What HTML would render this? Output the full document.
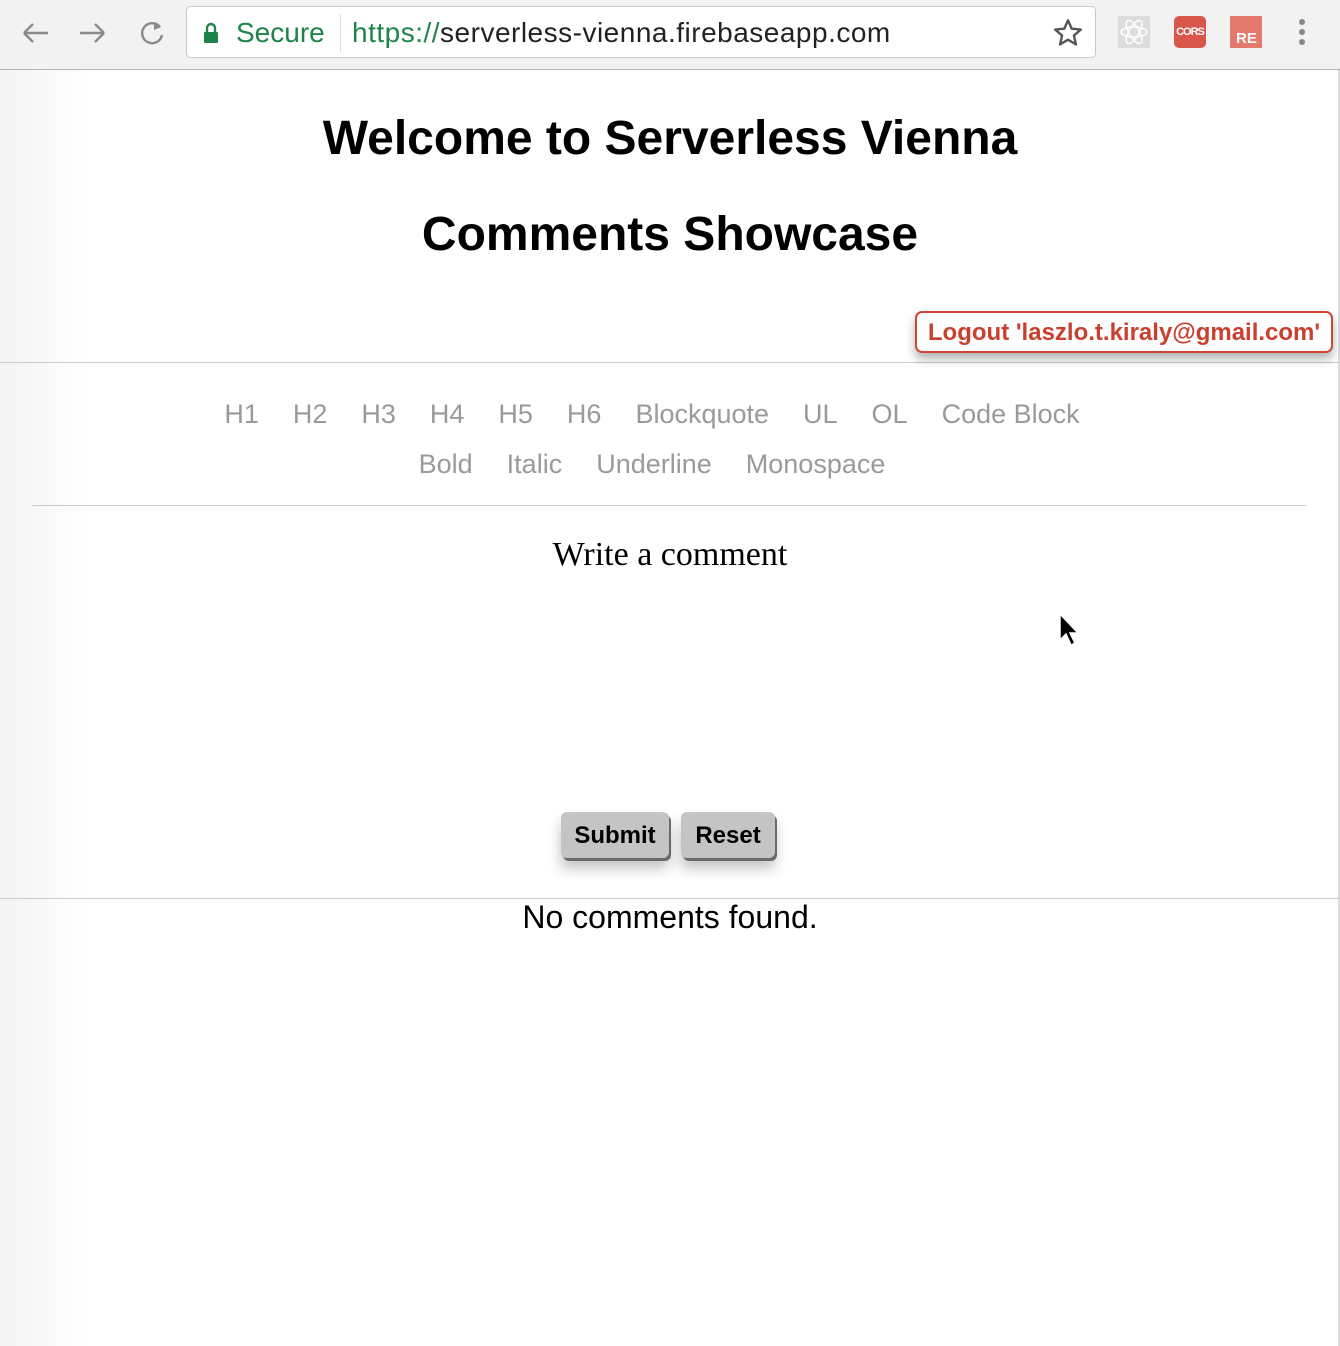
<!DOCTYPE html>
<html><head><meta charset="utf-8"><style>
*{margin:0;padding:0;box-sizing:border-box}
body{width:1340px;height:1346px;position:relative;background:#fff;font-family:"Liberation Sans",Arial,sans-serif;overflow:hidden}
.abs{position:absolute}
#bar{left:0;top:0;width:1340px;height:70px;background:#f2f2f2;border-bottom:1px solid #b5b5b5}
#url{left:186px;top:6px;width:910px;height:52px;background:#fff;border:1px solid #c8c8c8;border-radius:5px}
.c{left:0;width:1340px;text-align:center}
.nav{color:#9a9a9a;font-size:27px;left:-18px}
.nav span{margin:0 17px}
.btn{top:812px;height:46px;background:#c4c4c4;border-radius:6px;font-weight:bold;font-size:24px;text-align:center;line-height:48px;box-shadow:2px 3px 0 #6a6a6a,0 10px 14px rgba(0,0,0,.25)}
</style></head><body>
<div id="bar" class="abs"></div>
<svg class="abs" style="left:20px;top:18px" width="150" height="30" viewBox="0 0 150 30" fill="none" stroke="#8a8a8a" stroke-width="2.4">
<path d="M4 15H28M4 15L13 6M4 15L13 24"/>
<path d="M60 15H84M84 15L75 6M84 15L75 24"/>
<path d="M140 9A10 10 0 1 0 142 17"/><path d="M134 4L141 9L134 12" fill="#8a8a8a" stroke="none"/>
</svg>
<div id="url" class="abs"></div>
<svg class="abs" style="left:203px;top:22px" width="16" height="22"><path d="M4 10V6A4 4 0 0 1 12 6V10" stroke="#1e8449" stroke-width="2.4" fill="none"/><rect x="1" y="10" width="14" height="11" rx="1" fill="#1e8449"/></svg>
<div class="abs" style="left:236px;top:17px;font-size:28px;color:#1e8449">Secure</div>
<div class="abs" style="left:340px;top:14px;width:1px;height:38px;background:#ddd"></div>
<div class="abs" style="left:352px;top:17px;font-size:28px;letter-spacing:0.5px;color:#1e8449">https://<span style="color:#222">serverless-vienna.firebaseapp.com</span></div>
<svg class="abs" style="left:1052px;top:17px" width="32" height="32" viewBox="0 0 24 24"><path d="M12 2.5l2.8 6.3 6.8.6-5.2 4.5 1.6 6.7L12 17l-6 3.6 1.6-6.7L2.4 9.4l6.8-.6z" fill="none" stroke="#555" stroke-width="1.8" stroke-linejoin="round"/></svg>
<div class="abs" style="left:1118px;top:16px;width:32px;height:32px;background:#ddd"></div>
<svg class="abs" style="left:1118px;top:16px" width="32" height="32" viewBox="0 0 32 32" fill="none" stroke="#fff" stroke-width="1.5"><ellipse cx="16" cy="16" rx="13" ry="5"/><ellipse cx="16" cy="16" rx="13" ry="5" transform="rotate(60 16 16)"/><ellipse cx="16" cy="16" rx="13" ry="5" transform="rotate(-60 16 16)"/></svg>
<div class="abs" style="left:1174px;top:16px;width:32px;height:32px;background:#d9574a;border-radius:5px;color:#fff;font-size:11px;font-weight:bold;line-height:32px;text-align:center;letter-spacing:-1px">CORS</div>
<div class="abs" style="left:1230px;top:16px;width:32px;height:32px;background:#e47a6e;color:#fff;font-size:15px;font-weight:bold;padding:14px 0 0 6px;line-height:18px">RE</div>
<svg class="abs" style="left:1296px;top:18px" width="12" height="30"><circle cx="6" cy="4" r="3" fill="#888"/><circle cx="6" cy="14" r="3" fill="#888"/><circle cx="6" cy="24" r="3" fill="#888"/></svg>
<div class="abs" style="left:0;top:70px;width:90px;height:1276px;background:linear-gradient(to right,#f3f3f3,#fff)"></div>
<div class="abs" style="left:1338px;top:70px;width:2px;height:1276px;background:#ddd"></div>

<div class="abs c" style="top:111px;font-size:48px;font-weight:bold">Welcome to Serverless Vienna</div>
<div class="abs c" style="top:207px;font-size:48px;font-weight:bold">Comments Showcase</div>
<div class="abs" style="left:0;top:362px;width:1340px;height:1px;background:#ccc"></div>
<div class="abs" style="left:915px;top:311px;width:418px;height:42px;border:2px solid #d04437;border-radius:7px;background:#fff;color:#c9402f;font-weight:bold;font-size:24px;text-align:center;line-height:39px;box-shadow:0 6px 10px rgba(0,0,0,.3)">Logout 'laszlo.t.kiraly@gmail.com'</div>
<div class="abs c nav" style="top:399px"><span>H1</span><span>H2</span><span>H3</span><span>H4</span><span>H5</span><span>H6</span><span>Blockquote</span><span>UL</span><span>OL</span><span>Code Block</span></div>
<div class="abs c nav" style="top:449px"><span>Bold</span><span>Italic</span><span>Underline</span><span>Monospace</span></div>
<div class="abs" style="left:32px;top:505px;width:1274px;height:1px;background:#ccc"></div>
<div class="abs c" style="top:536px;font-family:'Liberation Serif',serif;font-size:34px">Write a comment</div>
<svg class="abs" style="left:1058px;top:612px" width="24" height="36"><path d="M2 2V28L8 22L13 33L17 31L12 21H20Z" fill="#000" stroke="#fff" stroke-width="1.5"/></svg>
<div class="abs btn" style="left:561px;width:108px">Submit</div>
<div class="abs btn" style="left:681px;width:94px">Reset</div>
<div class="abs" style="left:0;top:898px;width:1340px;height:1px;background:#ccc"></div>
<div class="abs c" style="top:899px;font-size:32px">No comments found.</div>
</body></html>
